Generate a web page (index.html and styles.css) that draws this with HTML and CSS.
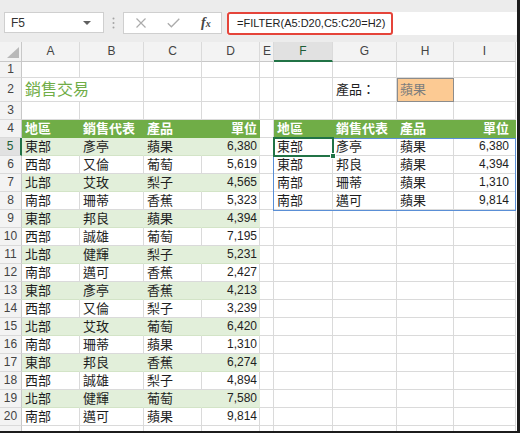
FILE: index.html
```html
<!DOCTYPE html>
<html lang="zh-Hant">

<head>
    <meta charset="UTF-8">
    <meta name="viewport" content="width=device-width, initial-scale=1.0">
    <title>FILTER 函數</title>
    <link rel="stylesheet" href="styles.css">
</head>

<body>
    <div class="window">
        <div class="formula-bar">
            <div class="name-box">
                <span>F5</span>
                <span class="caret"></span>
            </div>
            <div class="grip">
                <svg width="3" height="12" viewBox="0 0 3 12">
                    <circle cx="1.5" cy="1.5" r="1" fill="#a3a3a3" />
                    <circle cx="1.5" cy="6" r="1" fill="#a3a3a3" />
                    <circle cx="1.5" cy="10.5" r="1" fill="#a3a3a3" />
                </svg>
            </div>
            <div class="fx-buttons">
                <svg width="10" height="10" viewBox="0 0 10 10">
                    <path d="M0.5 0.5L9.5 9.5M9.5 0.5L0.5 9.5" stroke="#ababab" stroke-width="1.2" />
                </svg>
                <svg width="13" height="10" viewBox="0 0 13 10">
                    <path d="M0.8 5.2L4.4 8.8L12.3 0.8" fill="none" stroke="#ababab" stroke-width="1.3" />
                </svg>
                <i class="fx">f<small>x</small></i>
            </div>
            <div class="formula-input">
                <span class="formula-text">=FILTER(A5:D20,C5:C20=H2)</span>
            </div>
        </div>

        <div class="sheet">
            <div class="grid" id="grid"></div>
            <div class="spill-range"></div>
            <div class="active-cell"><span class="fill-handle"></span></div>
        </div>
    </div>

    <script>
        const letters = ['A', 'B', 'C', 'D', 'E', 'F', 'G', 'H', 'I'];

        const sales = [
            ['東部', '彥亭', '蘋果', '6,380'],
            ['西部', '又倫', '葡萄', '5,619'],
            ['北部', '艾玫', '梨子', '4,565'],
            ['南部', '珊蒂', '香蕉', '5,323'],
            ['東部', '邦良', '蘋果', '4,394'],
            ['西部', '誠雄', '葡萄', '7,195'],
            ['北部', '健輝', '梨子', '5,231'],
            ['南部', '邁可', '香蕉', '2,427'],
            ['東部', '彥亭', '香蕉', '4,213'],
            ['西部', '又倫', '梨子', '3,239'],
            ['北部', '艾玫', '葡萄', '6,420'],
            ['南部', '珊蒂', '蘋果', '1,310'],
            ['東部', '邦良', '香蕉', '6,274'],
            ['西部', '誠雄', '梨子', '4,894'],
            ['北部', '健輝', '葡萄', '7,580'],
            ['南部', '邁可', '蘋果', '9,814']
        ];
        const headers = ['地區', '銷售代表', '產品', '單位'];
        const product = '蘋果';
        const results = sales.filter(r => r[2] === product);

        function makeCell(text, cls) {
            const cell = document.createElement('div');
            cell.className = 'cell' + (cls ? ' ' + cls : '');
            cell.textContent = text || '';
            return cell;
        }

        function makeRow(cls) {
            const row = document.createElement('div');
            row.className = 'row' + (cls ? ' ' + cls : '');
            return row;
        }

        function buildSheet() {
            const grid = document.getElementById('grid');

            // column letters
            const head = makeRow('col-head');
            const corner = makeCell('', 'corner');
            corner.appendChild(document.createElement('span'));
            head.appendChild(corner);
            letters.forEach(l => head.appendChild(makeCell(l, 'ch' + (l === 'F' ? ' active' : ''))));
            grid.appendChild(head);

            // row 21 only peeks out under the window edge, so no label
            for (let r = 1; r <= 21; r++) {
                const row = makeRow('r' + r);
                row.appendChild(makeCell(r < 21 ? String(r) : '', 'rh' + (r === 5 ? ' active' : '')));

                for (let c = 0; c < 9; c++) {
                    let text = '';
                    let cls = '';
                    const num = c === 3 || c === 8;

                    if (r === 2 && c === 0) { text = '銷售交易'; cls = 'title'; }
                    if (r === 2 && c === 6) { text = '產品：'; }
                    if (r === 2 && c === 7) { text = product; cls = 'criteria'; }

                    if (r === 4 && c !== 4) {
                        text = headers[c < 4 ? c : c - 5];
                        cls = 'th';
                    }

                    if (r >= 5 && r <= 20) {
                        const i = r - 5;
                        if (c < 4) {
                            text = sales[i][c];
                            if (i % 2 === 0) cls = 'band';
                        } else if (c > 4 && i < results.length) {
                            text = results[i][c - 5];
                        }
                    }

                    if (num) cls += ' num';
                    if (c === 8) cls += ' last';
                    row.appendChild(makeCell(text, cls.trim()));
                }
                grid.appendChild(row);
            }
        }

        buildSheet();
    </script>
</body>

</html>
```

FILE: styles.css
```css
* {
    box-sizing: border-box;
}

body {
    margin: 0;
    background-color: #fff;
    font-family: "Liberation Sans", "Noto Sans CJK TC", sans-serif;
}

.window {
    width: 520px;
    height: 433px;
    overflow: hidden;
    background-color: #fff;
    border-right: 3px solid #1c1c1c;
    border-bottom: 2px solid #1c1c1c;
}

/* formula bar */

.formula-bar {
    height: 42px;
    display: flex;
    align-items: flex-start;
    padding: 12px 0 0 4px;
    background-color: #ececec;
}

.name-box {
    width: 100px;
    height: 21px;
    display: flex;
    align-items: center;
    justify-content: space-between;
    padding: 0 12px 0 6px;
    background-color: #fff;
    border: 1px solid #cfcfcf;
    font-size: 12px;
    color: #333;
}

.caret {
    border-left: 4px solid transparent;
    border-right: 4px solid transparent;
    border-top: 4px solid #606060;
}

.grip {
    width: 19px;
    display: flex;
    justify-content: center;
    padding-top: 5px;
}

.fx-buttons {
    width: 99px;
    height: 22px;
    display: flex;
    align-items: center;
    gap: 21px;
    padding-left: 12px;
    background-color: #fff;
    border: 1px solid #cfcfcf;
}

.fx {
    font-family: "Liberation Serif", serif;
    font-size: 14px;
    font-weight: bold;
    color: #454545;
    line-height: 1;
}

.fx small {
    font-size: 10px;
}

.formula-input {
    flex: 1;
    height: 23px;
    margin-left: 5px;
    background-color: #fff;
}

.formula-text {
    display: inline-block;
    height: 23px;
    padding: 0 6px 0 8px;
    border: 2px solid #e5443a;
    border-radius: 3px;
    font-size: 11px;
    line-height: 19px;
    color: #222;
}

/* sheet */

.sheet {
    position: relative;
}

.row {
    display: grid;
    grid-template-columns: 22px 58px 64px 58px 58px 14px 59px 64px 57px 62px;
    height: 18px;
}

.row.col-head {
    height: 20px;
}

.row.r1 {
    height: 16px;
}

.row.r2 {
    height: 24px;
}

.cell {
    padding: 0 3px;
    border-right: 1px solid #dadada;
    border-bottom: 1px solid #dadada;
    font-size: 13px;
    line-height: 17px;
    color: #1e1e1e;
    white-space: nowrap;
    overflow: hidden;
}

.r1 .cell {
    line-height: 15px;
}

.r2 .cell {
    line-height: 23px;
}

.num {
    text-align: right;
    padding-right: 2px;
    font-size: 12px;
}

.last {
    padding-right: 6px;
}

.corner {
    position: relative;
    background-color: #f3f3f3;
    border-right-color: #c8c8c8;
    border-bottom-color: #c8c8c8;
}

.corner span {
    position: absolute;
    right: 2px;
    bottom: 3px;
    border-left: 12px solid transparent;
    border-bottom: 11px solid #b9b9b9;
}

.ch {
    background-color: #f3f3f3;
    border-bottom-color: #c8c8c8;
    text-align: center;
    font-size: 12px;
    line-height: 19px;
    color: #444;
}

.ch.active {
    background-color: #e1e1e1;
    border-bottom: 2px solid #217346;
    color: #1e5e38;
}

.rh {
    padding: 0;
    background-color: #f3f3f3;
    border-right-color: #c8c8c8;
    text-align: center;
    font-size: 12px;
    color: #444;
}

.rh.active {
    background-color: #e1e1e1;
    border-right: 2px solid #217346;
    color: #1e5e38;
}

.title {
    overflow: visible;
    border-right: none;
    font-size: 16px;
    color: #70ad47;
}

.criteria {
    background-color: #fcca93;
    border-color: #8c8c8c;
    box-shadow: inset 1px 1px 0 #8c8c8c;
    color: #7d7d7d;
}

.th {
    background-color: #70ad47;
    border-color: #70ad47;
    color: #fff;
    font-weight: bold;
}

.th.num {
    font-size: 13px;
}

.band {
    background-color: #e2efda;
    border-right-color: #e2efda;
    border-bottom-color: #d3e4c7;
}

.spill-range {
    position: absolute;
    left: 273px;
    top: 96px;
    width: 243px;
    height: 73px;
    border: 1px solid #5a8fd6;
}

.active-cell {
    position: absolute;
    left: 273px;
    top: 95px;
    width: 61px;
    height: 20px;
    border: 2px solid #217346;
}

.fill-handle {
    position: absolute;
    right: -4px;
    bottom: -4px;
    width: 6px;
    height: 6px;
    background-color: #217346;
    border: 1px solid #fff;
}
```
